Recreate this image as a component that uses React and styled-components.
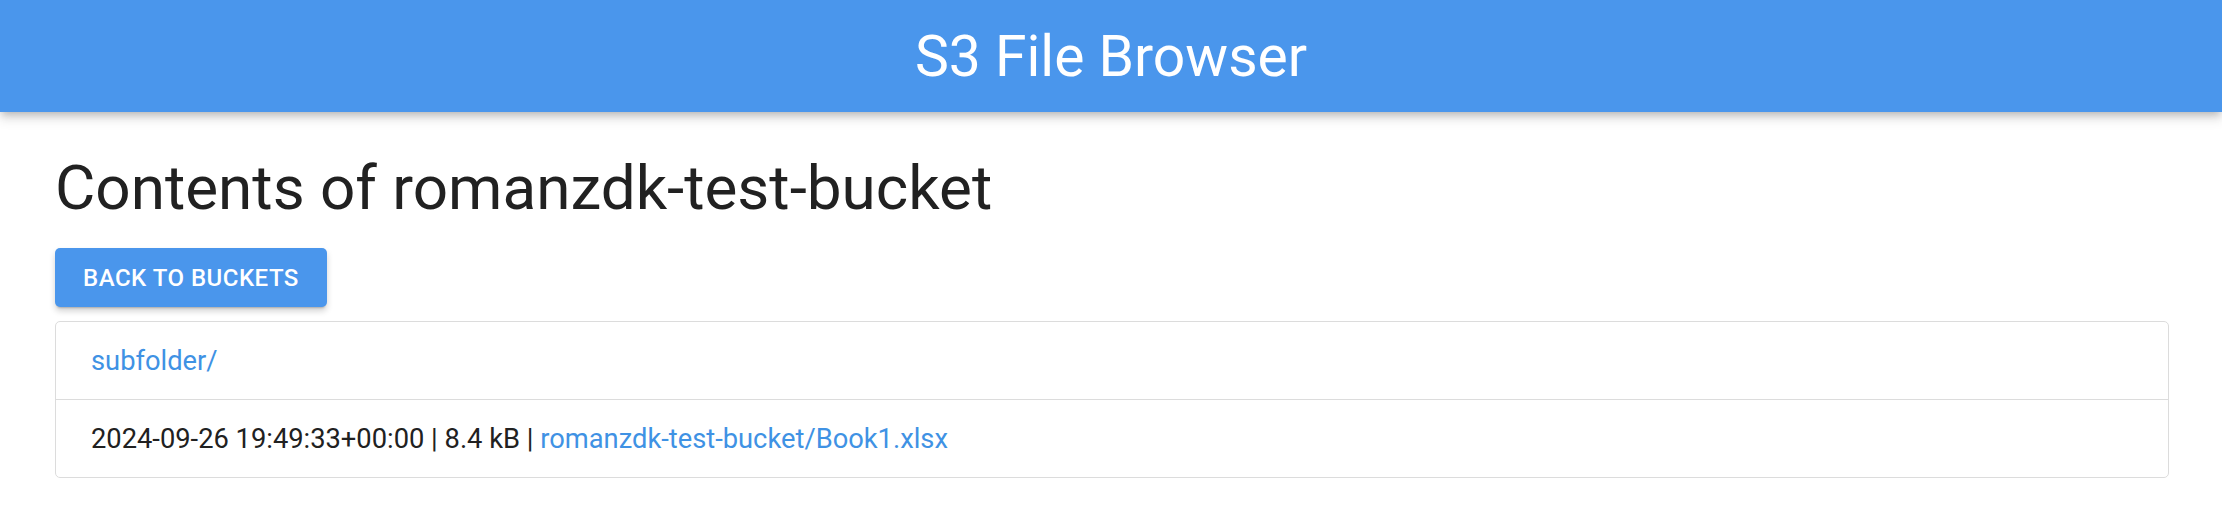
import React from 'react';
import styled, { createGlobalStyle } from 'styled-components';

const GlobalStyle = createGlobalStyle`
  body {
    margin: 0;
    background: #ffffff;
    font-family: Roboto, "Helvetica Neue", Arial, sans-serif;
    color: #212121;
  }
`;

const AppBar = styled.header`
  height: 112px;
  background: #4a96ec;
  display: flex;
  align-items: center;
  justify-content: center;
  box-shadow: 0 4px 8px -2px rgba(0, 0, 0, 0.25), 0 8px 10px 1px rgba(0, 0, 0, 0.08);
`;

const AppTitle = styled.h1`
  margin: 0;
  font-size: 57px;
  font-weight: 400;
  color: #ffffff;
  line-height: 1;
`;

const Main = styled.main`
  padding: 0 53px 0 55px;
`;

const Heading = styled.h2`
  margin: 38px 0 22px;
  font-size: 62px;
  font-weight: 400;
  line-height: 76px;
  color: #212121;
`;

const Button = styled.button`
  display: inline-flex;
  align-items: center;
  height: 59px;
  padding: 0 28px;
  border: 0;
  border-radius: 5px;
  background: #4a96ec;
  color: #ffffff;
  font-family: Roboto, sans-serif;
  font-size: 24px;
  font-weight: 500;
  letter-spacing: 0.5px;
  text-transform: uppercase;
  box-shadow: 0 3px 2px -2px rgba(0, 0, 0, 0.2), 0 4px 6px 0 rgba(0, 0, 0, 0.18);
  cursor: pointer;
`;

const List = styled.ul`
  margin: 14px 0 0;
  padding: 0;
  list-style: none;
  border: 1px solid #dcdcdc;
  border-radius: 5px;
`;

const Row = styled.li`
  height: 77px;
  display: flex;
  align-items: center;
  padding: 0 35px;
  font-size: 27.3px;
  color: #212121;
  border-top: ${(p) => (p.first ? 'none' : '1px solid #dcdcdc')};
`;

const Link = styled.a`
  color: #3f92e4;
  text-decoration: none;
`;

const Sep = styled.span`
  white-space: pre;
`;

const files = [
  { date: '2024-09-26 19:49:33+00:00', size: '8.4 kB', key: 'romanzdk-test-bucket/Book1.xlsx' },
];

export default function App() {
  return (
    <>
      <GlobalStyle />
      <AppBar>
        <AppTitle>S3 File Browser</AppTitle>
      </AppBar>
      <Main>
        <Heading>Contents of romanzdk-test-bucket</Heading>
        <Button type="button">Back to buckets</Button>
        <List>
          <Row first>
            <Link href="#">subfolder/</Link>
          </Row>
          {files.map((f) => (
            <Row key={f.key}>
              {f.date}
              <Sep> | </Sep>
              {f.size}
              <Sep> | </Sep>
              <Link href="#">{f.key}</Link>
            </Row>
          ))}
        </List>
      </Main>
    </>
  );
}
